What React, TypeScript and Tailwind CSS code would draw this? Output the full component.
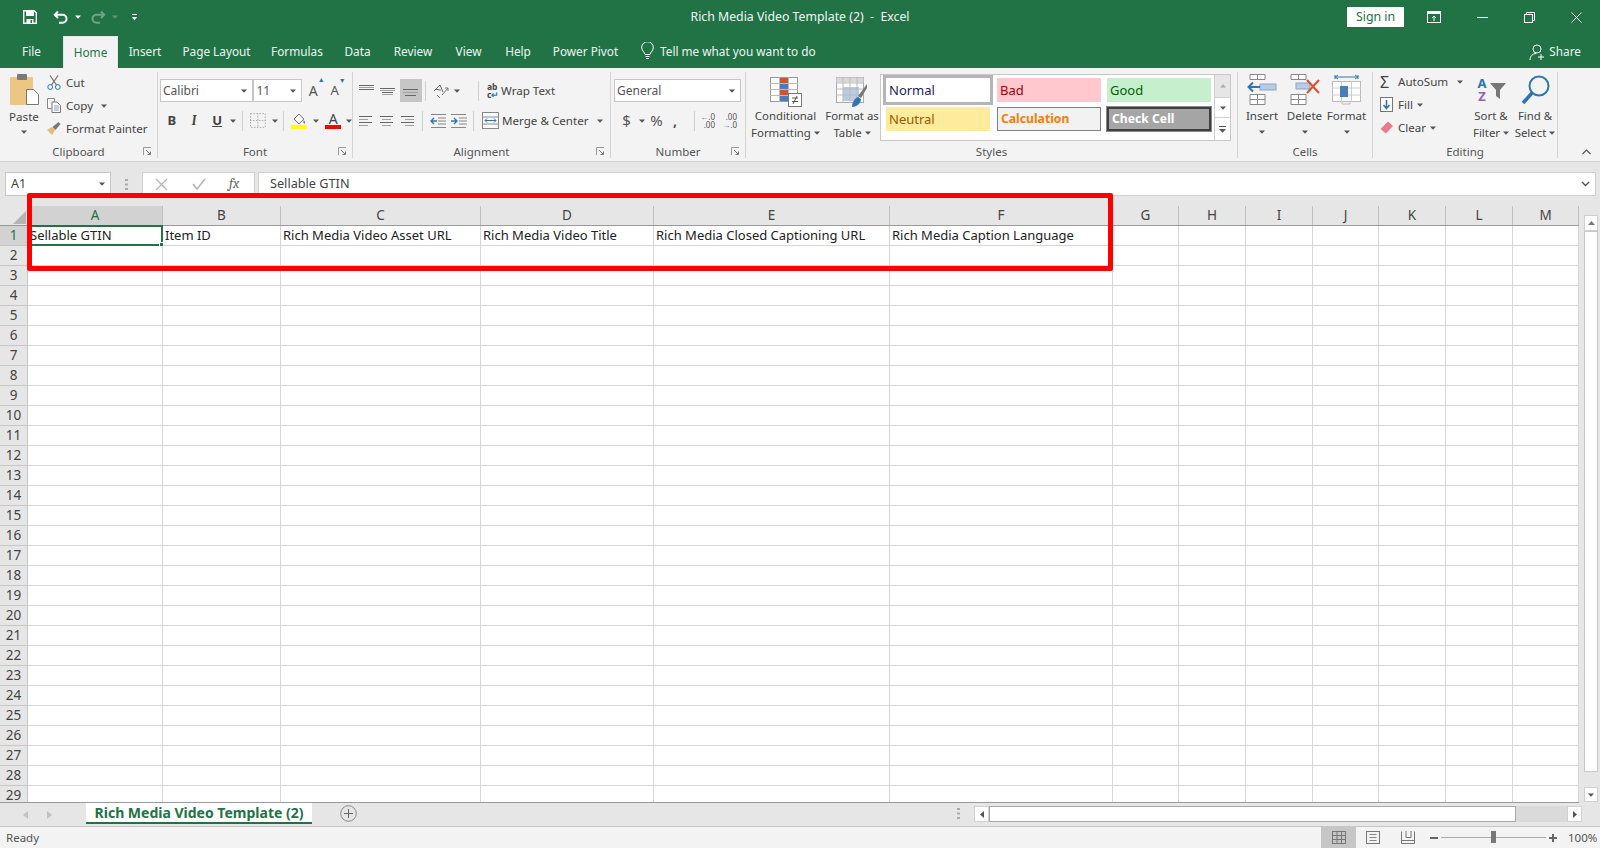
import React from "react";

const colWidths = [135, 118, 200, 173, 236, 223, 66, 67, 67, 66, 67, 67, 66];
const colNames = ["A", "B", "C", "D", "E", "F", "G", "H", "I", "J", "K", "L", "M"];
const headers = [
  "Sellable GTIN",
  "Item ID",
  "Rich Media Video Asset URL",
  "Rich Media Video Title",
  "Rich Media Closed Captioning URL",
  "Rich Media Caption Language",
];
const rows = Array.from({ length: 29 }, (_, i) => i + 1);

const tabs = [
  { label: "Insert", w: "w-[54px]" },
  { label: "Page Layout", w: "w-[89px]" },
  { label: "Formulas", w: "w-[72px]" },
  { label: "Data", w: "w-[49px]" },
  { label: "Review", w: "w-[62px]" },
  { label: "View", w: "w-[49px]" },
  { label: "Help", w: "w-[50px]" },
  { label: "Power Pivot", w: "w-[85px]" },
];

function Caret({ color = "#555" }: { color?: string }) {
  return (
    <svg width="6" height="4" viewBox="0 0 6 4" className="shrink-0">
      <path d="M0 0.5h6L3 3.8z" fill={color} />
    </svg>
  );
}

function Launcher() {
  return (
    <svg width="9" height="9" viewBox="0 0 9 9" className="shrink-0">
      <path d="M0.5 8V0.5H8" stroke="#999" fill="none" />
      <path d="M3 3l4 4M7.5 4.5v3h-3" stroke="#777" fill="none" />
    </svg>
  );
}

function Group({
  w,
  label,
  launcher,
  children,
}: {
  w: string;
  label: string;
  launcher?: boolean;
  children: React.ReactNode;
}) {
  return (
    <section className={`${w} shrink-0 h-full flex flex-col border-r border-[#d4d4d4]`}>
      <div className="flex-1 min-h-0">{children}</div>
      <div className="h-[14px] pt-[2px] flex items-center justify-center relative text-[11.5px] text-[#555] leading-none">
        {label}
        {launcher && (
          <span className="absolute right-[5px] top-[3px] flex">
            <Launcher />
          </span>
        )}
      </div>
    </section>
  );
}

function Combo({ w, text }: { w: string; text: string }) {
  return (
    <div className={`${w} h-[23px] bg-white border border-[#c6c6c6] flex items-center justify-between pl-[2px] pr-[5px] text-[12px] text-[#555]`}>
      <span>{text}</span>
      <Caret />
    </div>
  );
}

function VSep({ h = "h-[20px]" }: { h?: string }) {
  return <div className={`w-px ${h} bg-[#d0d0d0] shrink-0`} />;
}

function AlignIcon({ lines }: { lines: [number, number, number][] }) {
  return (
    <svg width="16" height="14" viewBox="0 0 16 14" className="shrink-0">
      {lines.map(([y, x, w], i) => (
        <rect key={i} x={x} y={y} width={w} height="1" fill={i % 2 ? "#a0a0a0" : "#666"} />
      ))}
    </svg>
  );
}

function Stacked({ lines, w }: { lines: string[]; w: string }) {
  return (
    <div className={`${w} flex flex-col items-center text-[11.4px] text-[#444] shrink-0`}>
      {lines.map((l) => (
        <span key={l} className="flex items-center gap-[3px] whitespace-nowrap h-[17px]">
          {l.replace("▾", "")}
          {l.includes("▾") && <Caret />}
        </span>
      ))}
    </div>
  );
}

function StyleCell({ className, children }: { className: string; children: React.ReactNode }) {
  return (
    <div className={`h-[24px] flex items-center pl-[3px] leading-none ${className}`}>{children}</div>
  );
}

function TitleBar() {
  return (
    <div className="h-[34px] grid grid-cols-[1fr_auto_1fr] items-center text-white">
      <div className="flex items-center pl-[23px]">
        <svg width="14" height="14" viewBox="0 0 14 14">
          <path d="M0.7 0.7h10.6l2 2v10.6H0.7z" fill="none" stroke="#fff" strokeWidth="1.4" />
          <rect x="3" y="1" width="8" height="5" fill="#fff" />
          <rect x="3.5" y="9" width="7" height="4.5" fill="#fff" />
          <rect x="7.5" y="10" width="1.5" height="3" fill="#217346" />
        </svg>
        <svg width="16" height="14" viewBox="0 0 16 14" className="ml-[16px]">
          <path d="M5 1.5L1.8 4.8 5 8" fill="none" stroke="#fff" strokeWidth="2" />
          <path d="M2 4.8h7.5a4 4 0 0 1 0 8H6" fill="none" stroke="#fff" strokeWidth="2" />
        </svg>
        <span className="ml-[6px] flex">
          <Caret color="#fff" />
        </span>
        <svg width="16" height="14" viewBox="0 0 16 14" className="ml-[9px]">
          <path d="M11 1.5l3.2 3.3L11 8" fill="none" stroke="#6fa587" strokeWidth="2" />
          <path d="M14 4.8H6.5a4 4 0 0 0 0 8H10" fill="none" stroke="#6fa587" strokeWidth="2" />
        </svg>
        <span className="ml-[6px] flex">
          <Caret color="#5f9a7b" />
        </span>
        <svg width="5" height="7" viewBox="0 0 5 7" className="ml-[14px]">
          <rect x="0" y="0" width="5" height="1" fill="#fff" />
          <path d="M0 3h5L2.5 6.5z" fill="#fff" />
        </svg>
      </div>
      <div className="text-[12.3px] whitespace-pre text-[#f1f6f3]">Rich Media Video Template (2)  -  Excel</div>
      <div className="flex items-center justify-end pr-[18px]">
        <div className="w-[57px] h-[20px] bg-white text-[#217346] text-[12.3px] flex items-center justify-center">Sign in</div>
        <svg width="14" height="12" viewBox="0 0 14 12" className="ml-[23px]">
          <rect x="0.5" y="0.5" width="13" height="11" fill="none" stroke="#fff" />
          <rect x="0.5" y="0.5" width="13" height="2.5" fill="#fff" />
          <path d="M7 10V5M5 7l2-2 2 2" fill="none" stroke="#fff" />
        </svg>
        <svg width="11" height="11" viewBox="0 0 11 11" className="ml-[36px]">
          <path d="M0 5.5h11" stroke="#fff" />
        </svg>
        <svg width="11" height="11" viewBox="0 0 11 11" className="ml-[36px]">
          <rect x="0.5" y="2.5" width="8" height="8" fill="none" stroke="#fff" />
          <path d="M2.5 2.5v-2h8v8h-2" fill="none" stroke="#fff" />
        </svg>
        <svg width="11" height="11" viewBox="0 0 11 11" className="ml-[36px]">
          <path d="M0.5 0.5l10 10M10.5 0.5l-10 10" stroke="#fff" />
        </svg>
      </div>
    </div>
  );
}

function TabBar() {
  return (
    <div className="h-[34px] flex text-[11.8px] text-[#eef5f1]">
      <div className="w-[63px] h-full flex items-center justify-center pt-[1px]">File</div>
      <div className="w-[55px] mt-[2px] h-[32px] bg-[#f3f3f3] text-[#217346] flex items-center justify-center border-x border-t border-[#e2e8e4]">Home</div>
      {tabs.map((t) => (
        <div key={t.label} className={`${t.w} h-full flex items-center justify-center whitespace-nowrap pt-[1px]`}>
          {t.label}
        </div>
      ))}
      <div className="flex items-center ml-[13px] gap-[6px]">
        <svg width="13" height="18" viewBox="0 0 13 18">
          <path d="M4 12.5c0-2-3.3-3.6-3.3-7a5.8 5.8 0 0 1 11.6 0c0 3.4-3.3 5-3.3 7z" fill="none" stroke="#fff" />
          <path d="M4.5 14.5h4M5 16.5h3" stroke="#fff" />
        </svg>
        <span className="whitespace-nowrap pt-[1px]">Tell me what you want to do</span>
      </div>
      <div className="ml-auto flex items-center pr-[19px] gap-[3px] pt-[2px]">
        <svg width="17" height="17" viewBox="0 0 17 17">
          <circle cx="8" cy="5" r="4" fill="none" stroke="#fff" />
          <path d="M1 16c0-4 3-6.5 6-6.5M12 10v6M9 13h6" fill="none" stroke="#fff" />
        </svg>
        <span>Share</span>
      </div>
    </div>
  );
}

function Ribbon() {
  return (
    <div className="h-[94px] bg-[#f3f3f3] border-b border-[#d2d2d2] flex pt-[4px] pb-[3px]">
      <Group w="w-[158px]" label="Clipboard" launcher>
        <div className="flex h-full">
          <div className="w-[47px] flex flex-col items-center pl-[1px] pt-[2px] text-[11.6px] text-[#444]">
            <svg width="29" height="31" viewBox="0 0 29 31">
              <rect x="0" y="3" width="23" height="28" rx="1" fill="#edc684" />
              <rect x="7" y="0" width="10" height="6" rx="1" fill="#7a7a7a" />
              <path d="M16.5 15.5h7l5 5v10h-12z" fill="#fff" stroke="#777" />
            </svg>
            <span className="mt-[3px] leading-[18px]">Paste</span>
            <span className="mt-[4px] flex">
              <Caret />
            </span>
          </div>
          <div className="flex flex-col text-[11.6px] text-[#444] mt-[-1px]">
            <div className="h-[23px] flex items-center">
              <svg width="14" height="15" viewBox="0 0 14 15">
                <path d="M3 0.5l6.5 9.5M11 0.5L4.5 10" stroke="#777" strokeWidth="1.3" fill="none" />
                <circle cx="3.2" cy="12" r="2.4" fill="none" stroke="#2f75b5" />
                <circle cx="10.8" cy="12" r="2.4" fill="none" stroke="#2f75b5" />
              </svg>
              <span className="ml-[5px]">Cut</span>
            </div>
            <div className="h-[23px] flex items-center">
              <svg width="14" height="15" viewBox="0 0 14 15">
                <path d="M0.5 0.5h7v3M0.5 0.5v10h4" fill="#fff" stroke="#888" />
                <path d="M5 4h5l3.5 3.5v7H5z" fill="#fff" stroke="#777" />
                <path d="M7 8h5M7 10h5M7 12h5" stroke="#8a9fb5" />
              </svg>
              <span className="ml-[5px]">Copy</span>
              <span className="ml-[8px] flex">
                <Caret />
              </span>
            </div>
            <div className="h-[23px] flex items-center">
              <svg width="14" height="13" viewBox="0 0 14 13">
                <path d="M0 8l5-3 3 3-3 5z" fill="#e8b878" />
                <path d="M5.5 5l6-5 2 2-5 6z" fill="#777" />
              </svg>
              <span className="ml-[5px] whitespace-nowrap">Format Painter</span>
            </div>
          </div>
        </div>
      </Group>

      <Group w="w-[195px]" label="Font" launcher>
        <div className="pl-[2px] pt-[7px]">
          <div className="flex items-center">
            <Combo w="w-[95px]" text="Calibri" />
            <Combo w="w-[49px]" text="11" />
            <span className="ml-[7px] w-[22px] flex text-[14px] text-[#555] leading-none">A<sup className="text-[7px] text-[#2f75b5]">▲</sup></span>
            <span className="w-[22px] flex text-[13px] text-[#555] leading-none">A<sup className="text-[7px] text-[#2f75b5]">▼</sup></span>
          </div>
          <div className="flex items-center h-[23px] mt-[7px] text-[13px] text-[#444] font-bold">
            <span className="w-[24px] text-center">B</span>
            <span className="w-[21px] text-center italic font-serif">I</span>
            <span className="w-[26px] text-center underline">U</span>
            <Caret />
            <span className="w-[6px]" />
            <VSep />
            <svg width="16" height="15" viewBox="0 0 16 15" className="ml-[7px]">
              <rect x="0.5" y="0.5" width="15" height="14" fill="none" stroke="#aaa" strokeDasharray="1.5 1.5" />
              <path d="M8 0v15M0 7.5h16" stroke="#aaa" strokeDasharray="1.5 1.5" />
            </svg>
            <span className="ml-[6px] flex">
              <Caret />
            </span>
            <span className="w-[6px]" />
            <VSep />
            <svg width="16" height="17" viewBox="0 0 16 17" className="ml-[7px]">
              <path d="M3 7l5-5 5 5-5 5z" fill="#fff" stroke="#666" />
              <path d="M13 8c1 1.5 2 2.5 1 3.5-1 .5-2-.5-1-3.5z" fill="#777" />
              <rect x="0" y="13" width="16" height="4" fill="#ffff00" />
            </svg>
            <span className="ml-[6px] flex">
              <Caret />
            </span>
            <span className="relative ml-[6px] w-[16px] h-[17px] flex justify-center text-[14px] font-normal text-[#444] leading-[13px]">
              A
              <span className="absolute left-0 right-0 bottom-0 h-[4px] bg-[#ff0000]" />
            </span>
            <span className="ml-[5px] flex">
              <Caret />
            </span>
          </div>
        </div>
      </Group>

      <Group w="w-[258px]" label="Alignment" launcher>
        <div className="pl-[6px] pt-[7px]">
          <div className="flex items-center h-[23px]">
            <span className="w-[21px] flex">
              <AlignIcon lines={[[1, 0, 15], [3, 0, 15], [5, 0, 15]]} />
            </span>
            <span className="w-[20px] flex">
              <AlignIcon lines={[[4, 0, 15], [6, 0, 15], [8, 2, 11], [10, 2, 11]]} />
            </span>
            <span className="w-[22px] h-[23px] bg-[#c6c6c6] flex items-center justify-center">
              <AlignIcon lines={[[5, 0, 15], [8, 0, 15], [11, 2, 11]]} />
            </span>
            <span className="w-[3px]" />
            <VSep />
            <svg width="17" height="16" viewBox="0 0 17 16" className="ml-[7px]">
              <path d="M1 8l6-6 3 7M2.8 6.2l5 1" fill="none" stroke="#666" />
              <path d="M4 12l3 3M9 12l6-7M12 5h3v3" fill="none" stroke="#777" />
            </svg>
            <span className="ml-[4px] flex">
              <Caret />
            </span>
            <span className="w-[18px]" />
            <VSep />
            <span className="ml-[8px] w-[14px] text-[8.5px] leading-[8px] text-[#444] font-bold">
              ab
              <br />
              c<span className="text-[#2f75b5]">↵</span>
            </span>
            <span className="text-[11.6px] text-[#444] whitespace-nowrap">Wrap Text</span>
          </div>
          <div className="flex items-center h-[23px] mt-[7px]">
            <span className="w-[21px] flex">
              <AlignIcon lines={[[2, 0, 13], [5, 0, 9], [8, 0, 13], [11, 0, 9]]} />
            </span>
            <span className="w-[21px] flex">
              <AlignIcon lines={[[2, 0, 13], [5, 2, 9], [8, 0, 13], [11, 2, 9]]} />
            </span>
            <span className="w-[21px] flex">
              <AlignIcon lines={[[2, 0, 13], [5, 4, 9], [8, 0, 13], [11, 4, 9]]} />
            </span>
            <VSep />
            <svg width="16" height="14" viewBox="0 0 16 14" className="ml-[7px]">
              <path d="M1 0.5h15M8 4h8M8 7h8M8 10h8M1 13.5h15" stroke="#888" />
              <path d="M7 7H1M4 4L1 7l3 3" fill="none" stroke="#2f75b5" strokeWidth="1.4" />
            </svg>
            <svg width="16" height="14" viewBox="0 0 16 14" className="ml-[5px]">
              <path d="M0 0.5h15M8 4h8M8 7h8M8 10h8M0 13.5h15" stroke="#888" />
              <path d="M0 7h6M3 4l3 3-3 3" fill="none" stroke="#2f75b5" strokeWidth="1.4" />
            </svg>
            <span className="w-[6px]" />
            <VSep />
            <svg width="17" height="17" viewBox="0 0 17 17" className="ml-[8px]">
              <rect x="0.5" y="0.5" width="16" height="16" fill="#fff" stroke="#888" />
              <path d="M0 5h17M0 12h17" stroke="#888" />
              <path d="M3 8.5h11M5 6.5l-2 2 2 2M12 6.5l2 2-2 2" fill="none" stroke="#2f75b5" />
            </svg>
            <span className="ml-[3px] text-[11.6px] text-[#444] whitespace-nowrap">Merge &amp; Center</span>
            <span className="ml-[9px] flex">
              <Caret />
            </span>
          </div>
        </div>
      </Group>

      <Group w="w-[135px]" label="Number" launcher>
        <div className="pl-[3px] pt-[7px]">
          <Combo w="w-[127px]" text="General" />
          <div className="flex items-center h-[23px] mt-[7px] text-[#555]">
            <span className="w-[25px] text-center text-[15px]">$</span>
            <Caret />
            <span className="w-[23px] text-center text-[15px]">%</span>
            <span className="w-[14px] text-center text-[14px] font-bold">,</span>
            <span className="w-[12px]" />
            <VSep />
            <span className="ml-[4px] w-[16px] text-[8px] leading-[8px] text-right">
              <span className="text-[#2f75b5]">←</span>.0
              <br />
              .00
            </span>
            <span className="ml-[6px] w-[16px] text-[8px] leading-[8px] text-right">
              .00
              <br />
              <span className="text-[#2f75b5]">→</span>.0
            </span>
          </div>
        </div>
      </Group>

      <Group w="w-[492px]" label="Styles">
        <div className="flex h-full">
          <div className="w-[134px] flex pt-[5px]">
            <div className="w-[79px] flex flex-col items-center">
              <svg width="32" height="30" viewBox="0 0 32 30">
                <rect x="0.5" y="0.5" width="27" height="24" fill="#fff" stroke="#999" />
                <path d="M0 6.5h28M0 12.5h28M0 18.5h28M9.5 0v25M18.5 0v25" stroke="#bbb" />
                <rect x="10" y="1" width="8" height="5" fill="#d35230" />
                <rect x="10" y="7" width="8" height="5" fill="#4a7ebb" />
                <rect x="10" y="13" width="8" height="5" fill="#d35230" />
                <rect x="10" y="19" width="8" height="5" fill="#4a7ebb" />
                <rect x="18.5" y="16.5" width="13" height="13" fill="#fff" stroke="#777" />
                <path d="M22 21h6M22 24.5h6M27 19l-4 8" stroke="#555" fill="none" />
              </svg>
              <div>
                <Stacked w="w-[79px]" lines={["Conditional", "Formatting ▾"]} />
              </div>
            </div>
            <div className="w-[54px] flex flex-col items-center">
              <svg width="32" height="30" viewBox="0 0 32 30">
                <rect x="0.5" y="0.5" width="27" height="25" fill="#fff" stroke="#aaa" />
                <rect x="0.5" y="0.5" width="27" height="5" fill="#d8d8d8" />
                <rect x="7" y="10" width="16" height="14" fill="#b8cce4" />
                <path d="M0 6h28M0 12h28M0 18h28M7 0v26M14 0v26M21 0v26" stroke="#bbb" />
                <path d="M31 7L22 19l3 2 6-10z" fill="#777" />
                <path d="M16 30c0-5 3-9 6-10l3 2c0 4-4 8-9 8z" fill="#2f75b5" />
              </svg>
              <div>
                <Stacked w="w-[54px]" lines={["Format as", "Table ▾"]} />
              </div>
            </div>
          </div>
          <div className="w-[351px] h-[67px] mt-[2px] bg-white border border-[#c8c8c8] flex">
            <div className="flex-1 grid grid-cols-[106px_104px_104px] gap-x-[6px] gap-y-[5px] pl-[4px] pt-[3px] content-start">
              <StyleCell className="bg-white text-[#201f5c] text-[13px] outline-[3px] outline-[#b5b5b5] w-[104px] ml-[1px]">Normal</StyleCell>
              <StyleCell className="bg-[#ffc7ce] text-[#9c0006] text-[13px]">Bad</StyleCell>
              <StyleCell className="bg-[#c6efce] text-[#006100] text-[13px]">Good</StyleCell>
              <StyleCell className="bg-[#ffeb9c] text-[#9c5700] text-[13px] w-[104px] ml-[1px]">Neutral</StyleCell>
              <StyleCell className="bg-[#f2f2f2] text-[#fa7d00] font-bold border border-[#7f7f7f] text-[12.2px]">Calculation</StyleCell>
              <StyleCell className="bg-[#a5a5a5] text-white font-bold border-[2px] border-[#3f3f3f] outline outline-[#8a8a8a] text-[12.2px]">Check Cell</StyleCell>
            </div>
            <div className="w-[16px] flex flex-col border-l border-[#d0d0d0]">
              <div className="h-[22px] bg-[#e6e6e6] flex items-center justify-center">
                <svg width="6" height="4" viewBox="0 0 6 4">
                  <path d="M0 3.5h6L3 0.2z" fill="#aaa" />
                </svg>
              </div>
              <div className="h-[21px] border-y border-[#d0d0d0] flex items-center justify-center">
                <Caret />
              </div>
              <div className="flex-1 flex items-center justify-center">
                <svg width="7" height="7" viewBox="0 0 7 7">
                  <rect width="7" height="1" fill="#555" />
                  <path d="M0 3h7L3.5 6.8z" fill="#555" />
                </svg>
              </div>
            </div>
          </div>
        </div>
      </Group>

      <Group w="w-[135px]" label="Cells">
        <div className="flex pl-[2px] pt-[2px] text-[11.6px] text-[#444]">
          <div className="w-[44px] flex flex-col items-center">
            <svg width="30" height="31" viewBox="0 0 30 31">
              <path d="M3 0.5h15v5H3zM10.5 0v6" fill="#fff" stroke="#888" />
              <path d="M3 20.5h15v10H3zM3 25.5h15M10.5 20v10" fill="#fff" stroke="#888" />
              <rect x="13" y="10" width="16" height="6" fill="#b8cce4" stroke="#8aa6c8" />
              <path d="M13 13H2M6 8.5L1.5 13 6 17.5" fill="none" stroke="#2f75b5" strokeWidth="2" />
            </svg>
            <span className="leading-[18px] mt-[2px]">Insert</span>
            <span className="mt-[5px] flex">
              <Caret />
            </span>
          </div>
          <div className="w-[41px] flex flex-col items-center">
            <svg width="30" height="31" viewBox="0 0 30 31">
              <path d="M1 0.5h15v5H1zM8.5 0v6" fill="#fff" stroke="#888" />
              <path d="M1 20.5h15v10H1zM1 25.5h15M8.5 20v10" fill="#fff" stroke="#888" />
              <rect x="6" y="9" width="14" height="6" fill="#b8cce4" stroke="#8aa6c8" />
              <path d="M17 6l12 13M29 6L17 19" stroke="#d35230" strokeWidth="2" />
            </svg>
            <span className="leading-[18px] mt-[2px]">Delete</span>
            <span className="mt-[5px] flex">
              <Caret />
            </span>
          </div>
          <div className="w-[43px] flex flex-col items-center">
            <svg width="29" height="31" viewBox="0 0 29 31">
              <path d="M3 3h23M3 1v4M26 1v4M6 1L3 3l3 2M23 1l3 2-3 2" fill="none" stroke="#2f75b5" />
              <rect x="0.5" y="7.5" width="28" height="20" fill="#fff" stroke="#bbb" />
              <path d="M0 14h29M0 21h29M9.5 7v21M19.5 7v21" stroke="#ccc" />
              <rect x="8" y="12" width="8" height="11" fill="#4a7ebb" />
              <path d="M10 28v2h8v-2" fill="none" stroke="#bbb" />
            </svg>
            <span className="leading-[18px] mt-[2px]">Format</span>
            <span className="mt-[5px] flex">
              <Caret />
            </span>
          </div>
        </div>
      </Group>

      <Group w="w-[185px]" label="Editing">
        <div className="flex">
          <div className="w-[99px] flex flex-col text-[11.6px] text-[#444] pl-[7px]">
            <div className="h-[23px] mt-[-2px] flex items-center">
              <span className="w-[18px] text-[16px] leading-none text-[#444]">Σ</span>
              <span>AutoSum</span>
              <span className="ml-[9px] flex">
                <Caret />
              </span>
            </div>
            <div className="h-[23px] flex items-center">
              <svg width="13" height="15" viewBox="0 0 13 15" className="mr-[5px]">
                <rect x="0.5" y="0.5" width="12" height="14" fill="#fff" stroke="#777" />
                <path d="M6.5 3v8M3.5 8l3 3.5 3-3.5" fill="none" stroke="#2f75b5" strokeWidth="1.6" />
              </svg>
              <span>Fill</span>
              <span className="ml-[4px] flex">
                <Caret />
              </span>
            </div>
            <div className="h-[23px] flex items-center">
              <svg width="13" height="13" viewBox="0 0 13 13" className="mr-[5px]">
                <path d="M8 0.5l5 4.5-7 7.5L0.5 8z" fill="#e87a8e" />
              </svg>
              <span>Clear</span>
              <span className="ml-[4px] flex">
                <Caret />
              </span>
            </div>
          </div>
          <div className="w-[44px] flex flex-col items-center pt-[5px]">
            <div className="h-[28px] flex items-start">
              <span className="text-[13px] leading-[13px] font-bold text-center w-[12px]">
                <span className="text-[#2f75b5]">A</span>
                <br />
                <span className="text-[#8f5fbf]">Z</span>
              </span>
              <svg width="16" height="16" viewBox="0 0 16 16" className="ml-[2px] mt-[6px]">
                <path d="M0 0h16l-6 7v9l-4-3V7z" fill="#777" />
              </svg>
            </div>
            <div className="mt-[2px]">
              <Stacked w="w-[44px]" lines={["Sort &", "Filter ▾"]} />
            </div>
          </div>
          <div className="w-[44px] flex flex-col items-center pt-[3px]">
            <svg width="29" height="30" viewBox="0 0 29 30">
              <circle cx="18" cy="11" r="9.5" fill="none" stroke="#2f75b5" strokeWidth="2" />
              <path d="M11 18L2 28" stroke="#2f75b5" strokeWidth="3.5" />
            </svg>
            <div className="mt-[2px]">
              <Stacked w="w-[44px]" lines={["Find &", "Select ▾"]} />
            </div>
          </div>
        </div>
      </Group>

      <div className="flex-1 flex items-end justify-end pr-[9px] pb-[3px]">
        <svg width="9" height="6" viewBox="0 0 9 6">
          <path d="M0.5 5L4.5 1l4 4" fill="none" stroke="#555" strokeWidth="1.2" />
        </svg>
      </div>
    </div>
  );
}

function FormulaBar() {
  return (
    <div className="h-[44px] bg-[#e6e6e6] flex items-start pt-[10px] pl-[5px]">
      <div className="w-[106px] h-[24px] bg-white border border-[#c6c6c6] flex items-center justify-between pl-[5px] pr-[5px] text-[12.5px] text-[#444]">
        A1
        <Caret />
      </div>
      <div className="w-[31px] h-[24px] flex items-center justify-center">
        <svg width="3" height="11" viewBox="0 0 3 11">
          <path d="M0 0h3v2H0zM0 4.5h3v2H0zM0 9h3v2H0z" fill="#aaa" />
        </svg>
      </div>
      <div className="w-[113px] h-[24px] bg-white border border-[#d0d0d0] flex items-center">
        <svg width="13" height="13" viewBox="0 0 13 13" className="ml-[12px]">
          <path d="M1 1l11 11M12 1L1 12" stroke="#b5b5b5" strokeWidth="1.2" />
        </svg>
        <svg width="14" height="12" viewBox="0 0 14 12" className="ml-[24px]">
          <path d="M1 6l4 5 8-10" stroke="#b5b5b5" strokeWidth="1.6" fill="none" />
        </svg>
        <span className="ml-[23px] text-[14px] italic text-[#666] font-serif leading-none">fx</span>
      </div>
      <div className="ml-[3px] w-[1338px] h-[24px] bg-white border border-[#d0d0d0] flex items-center justify-between pl-[11px] pr-[5px] text-[12.7px] text-[#444]">
        Sellable GTIN
        <svg width="9" height="6" viewBox="0 0 9 6">
          <path d="M1 1l3.5 3.5L8 1" fill="none" stroke="#555" strokeWidth="1.4" />
        </svg>
      </div>
    </div>
  );
}

function Sheet() {
  return (
    <div className="h-[597px] flex bg-[#e6e6e6]">
      <div className="w-[1579px] overflow-hidden border-b border-[#9a9a9a] bg-white flex flex-col">
        <div className="h-[20px] shrink-0 flex bg-[#e6e6e6] border-b border-[#9a9a9a]">
          <div className="w-[28px] shrink-0 border-r border-[#c0c0c0] flex items-end justify-end pr-[1px] pb-[1px]">
            <svg width="13" height="13" viewBox="0 0 13 13">
              <path d="M13 0v13H0z" fill="#b5b5b5" />
            </svg>
          </div>
          {colNames.map((c, i) => (
            <div
              key={c}
              style={{ width: colWidths[i] }}
              className={`shrink-0 border-r border-[#c0c0c0] flex items-center justify-center text-[13.5px] ${
                i === 0 ? "bg-[#d2d2d2] text-[#217346]" : "text-[#444]"
              }`}
            >
              {c}
            </div>
          ))}
        </div>
        {rows.map((r) => (
          <div key={r} className="h-[20px] shrink-0 flex">
            <div
              className={`w-[28px] shrink-0 border-r border-b border-[#c6c6c6] flex items-center justify-center text-[13.5px] ${
                r === 1 ? "bg-[#d2d2d2] text-[#217346]" : "bg-[#e6e6e6] text-[#444]"
              }`}
            >
              {r}
            </div>
            {colWidths.map((w, i) => (
              <div
                key={i}
                style={{ width: w }}
                className="relative shrink-0 border-r border-b border-[#d6d6d6] flex items-center pl-[2px] pt-[1px] text-[13px] text-[#222] whitespace-nowrap"
              >
                {r === 1 && headers[i]}
                {r === 1 && i === 0 && (
                  <span className="absolute left-[-1px] top-[-1px] right-[-1px] bottom-[-1px] border-2 border-[#217346]">
                    <span className="absolute right-[-3px] bottom-[-3px] w-[5px] h-[5px] bg-[#217346] border border-white" />
                  </span>
                )}
              </div>
            ))}
          </div>
        ))}
      </div>
      <div className="flex-1 pl-[5px] pr-[2px] pt-[9px] flex flex-col">
        <div className="h-[16px] bg-white border border-[#d0d0d0] flex items-center justify-center">
          <svg width="7" height="4" viewBox="0 0 7 4">
            <path d="M0 4h7L3.5 0z" fill="#777" />
          </svg>
        </div>
        <div className="h-[541px] bg-white border border-[#c8c8c8]" />
        <div className="flex-1" />
        <div className="h-[15px] mb-[1px] bg-white border border-[#d0d0d0] flex items-center justify-center">
          <Caret />
        </div>
      </div>
    </div>
  );
}

function SheetTabs() {
  return (
    <div className="h-[24px] bg-[#e6e6e6] border-b border-[#c6c6c6] flex items-start">
      <div className="w-[86px] h-full flex items-center pl-[23px] gap-[19px]">
        <svg width="5" height="8" viewBox="0 0 5 8">
          <path d="M5 0v8L0 4z" fill="#c0c0c0" />
        </svg>
        <svg width="5" height="8" viewBox="0 0 5 8">
          <path d="M0 0v8l5-4z" fill="#c0c0c0" />
        </svg>
      </div>
      <div className="w-[226px] h-[21px] bg-white border-b-2 border-[#217346] flex items-center justify-center text-[14px] leading-none font-bold text-[#217346] whitespace-nowrap">
        Rich Media Video Template (2)
      </div>
      <svg width="17" height="17" viewBox="0 0 17 17" className="ml-[28px] mt-[2px]">
        <circle cx="8.5" cy="8.5" r="7.8" fill="none" stroke="#888" />
        <path d="M8.5 4v9M4 8.5h9" stroke="#666" />
      </svg>
      <div className="ml-[600px] h-[21px] flex items-center">
        <svg width="3" height="11" viewBox="0 0 3 11">
          <path d="M0 0h3v2H0zM0 4.5h3v2H0zM0 9h3v2H0z" fill="#aaa" />
        </svg>
      </div>
      <div className="ml-[14px] mt-[3px] flex h-[16px]">
        <div className="w-[15px] bg-white border border-[#d0d0d0] flex items-center justify-center">
          <svg width="4" height="7" viewBox="0 0 4 7">
            <path d="M4 0v7L0 3.5z" fill="#555" />
          </svg>
        </div>
        <div className="w-[527px] bg-white border border-[#a8a8a8]" />
        <div className="w-[51px] bg-[#dadada]" />
        <div className="w-[15px] bg-white border border-[#d0d0d0] flex items-center justify-center">
          <svg width="4" height="7" viewBox="0 0 4 7">
            <path d="M0 0v7l4-3.5z" fill="#555" />
          </svg>
        </div>
      </div>
    </div>
  );
}

function StatusBar() {
  return (
    <div className="h-[21px] bg-[#f3f3f3] flex items-center text-[11.5px] text-[#555]">
      <span className="pl-[6px] pt-[1px]">Ready</span>
      <div className="ml-auto h-full w-[35px] bg-[#c6c6c6] flex items-center justify-center">
        <svg width="14" height="13" viewBox="0 0 14 13">
          <rect x="0.5" y="0.5" width="13" height="12" fill="none" stroke="#777" />
          <path d="M0 4.5h14M0 8.5h14M5 0v13M9.5 0v13" stroke="#777" />
        </svg>
      </div>
      <svg width="14" height="13" viewBox="0 0 14 13" className="ml-[10px]">
        <rect x="0.5" y="0.5" width="13" height="12" fill="none" stroke="#777" />
        <path d="M3.5 3.5h7M3.5 6.5h7M3.5 9.5h7" stroke="#888" />
      </svg>
      <svg width="14" height="13" viewBox="0 0 14 13" className="ml-[21px]">
        <path d="M0.5 0.5v12h13V0.5M0.5 9.5h13M5 0v6.5h5V0" fill="none" stroke="#777" />
      </svg>
      <svg width="8" height="2" viewBox="0 0 8 2" className="ml-[15px]">
        <rect width="8" height="2" fill="#666" />
      </svg>
      <div className="ml-[3px] w-[105px] h-px bg-[#aaa] relative">
        <span className="absolute left-[50px] top-[-6px] w-[5px] h-[12px] bg-[#777]" />
      </div>
      <svg width="8" height="8" viewBox="0 0 8 8" className="ml-[3px]">
        <path d="M0 3h8v2H0zM3 0h2v8H3z" fill="#666" />
      </svg>
      <span className="ml-[11px] w-[32px] whitespace-nowrap">100%</span>
    </div>
  );
}

export default function App() {
  return (
    <div className="relative w-[1600px] h-[848px] overflow-hidden bg-white font-['Noto_Sans',sans-serif]">
      <div className="bg-[#217346]">
        <TitleBar />
        <TabBar />
      </div>
      <Ribbon />
      <FormulaBar />
      <Sheet />
      <SheetTabs />
      <StatusBar />
      {/* red annotation round the header row */}
      <div className="absolute left-[27px] top-[193px] w-[1086px] h-[78px] border-[5px] border-[#ff0000] rounded-[2px] pointer-events-none" />
    </div>
  );
}
